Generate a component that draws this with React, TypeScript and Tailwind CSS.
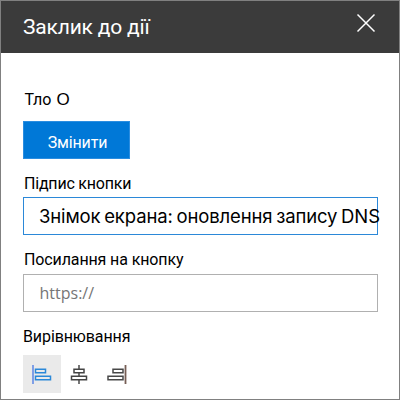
import type { ReactNode } from "react";

function Label({ children, className }: { children: ReactNode; className: string }) {
  return <div className={`h-5 whitespace-nowrap text-[16px] leading-5 text-black ${className}`}>{children}</div>;
}

function AlignLeft() {
  return (
    <svg width="38" height="38" viewBox="0 0 38 38" fill="none">
      <path d="M10 10v19" stroke="#7f9fe6" strokeWidth="2" />
      <path d="M12.5 14.2h10v3.6h-10zM12.5 21.2h15v3.6h-15z" stroke="#2b88d8" strokeWidth="1.5" />
    </svg>
  );
}

function AlignCenter() {
  return (
    <svg width="38" height="38" viewBox="0 0 38 38" fill="none">
      <path d="M18 10v4M18 18v3M18 25v4" stroke="#555" strokeWidth="1.6" />
      <path d="M13 14.2h10v3.6h-10zM10.5 21.2h15v3.6h-15z" stroke="#444" strokeWidth="1.5" />
    </svg>
  );
}

function AlignRight() {
  return (
    <svg width="38" height="38" viewBox="0 0 38 38" fill="none">
      <path d="M26.5 10v19" stroke="#765e55" strokeWidth="1.8" />
      <path d="M14 14.2h10v3.6h-10zM9 21.2h15v3.6h-15z" stroke="#484848" strokeWidth="1.5" />
    </svg>
  );
}

export default function App() {
  return (
    <div className="flex h-[400px] w-[400px] flex-col overflow-hidden border border-[#808080] bg-white font-['Roboto',sans-serif]">
      <header className="flex h-[52px] shrink-0 items-center justify-between bg-[#3b3b3b] pl-[22px] pr-[23px]">
        <h1 className="whitespace-nowrap pt-px text-[21px] leading-[51px] tracking-[-0.18px] text-white">Заклик до дії</h1>
        <svg className="-mt-[8px]" width="20" height="20" viewBox="0 0 20 20" fill="none">
          <path d="M1.5 1.5l17 17M18.5 1.5l-17 17" stroke="#fff" strokeWidth="1.5" />
        </svg>
      </header>
      <main className="flex flex-col pl-[22px]">
        <Label className="mt-[37px] pl-[1.5px]">
          Тло <span className="pl-px font-['Liberation_Sans',sans-serif] text-[17px]">О</span>
        </Label>
        <button className="mt-[11px] h-[38px] w-[107px] border border-[#2b8de0] bg-[#0078d7] pl-[2px] pt-[5px] text-[16px] tracking-[-0.15px] text-white">
          Змінити
        </button>
        <Label className="mt-[15px] pl-px tracking-[-0.2px]">Підпис кнопки</Label>
        <div className="mt-[3px] flex h-[38px] w-[355px] items-center whitespace-nowrap border border-[#2b88d8] pl-[15px] pt-[2px] font-['Inter',sans-serif] text-[18.5px] tracking-[-0.13px] [word-spacing:-1.3px] text-black">
          Знімок екрана: оновлення запису DNS
        </div>
        <Label className="mt-[15px] pl-px tracking-[-0.12px]">Посилання на кнопку</Label>
        <div className="mt-1 flex h-[38px] w-[355px] items-center border border-[#b0b0b0] pl-[15.5px] font-['Open_Sans',sans-serif] text-[16px] text-[#767676]">
          https://
        </div>
        <Label className="mt-[15px] tracking-[-0.1px]">Вирівнювання</Label>
        <div className="mt-2 flex">
          <button className="bg-[#eaeaea]"><AlignLeft /></button>
          <button><AlignCenter /></button>
          <button><AlignRight /></button>
        </div>
      </main>
    </div>
  );
}
